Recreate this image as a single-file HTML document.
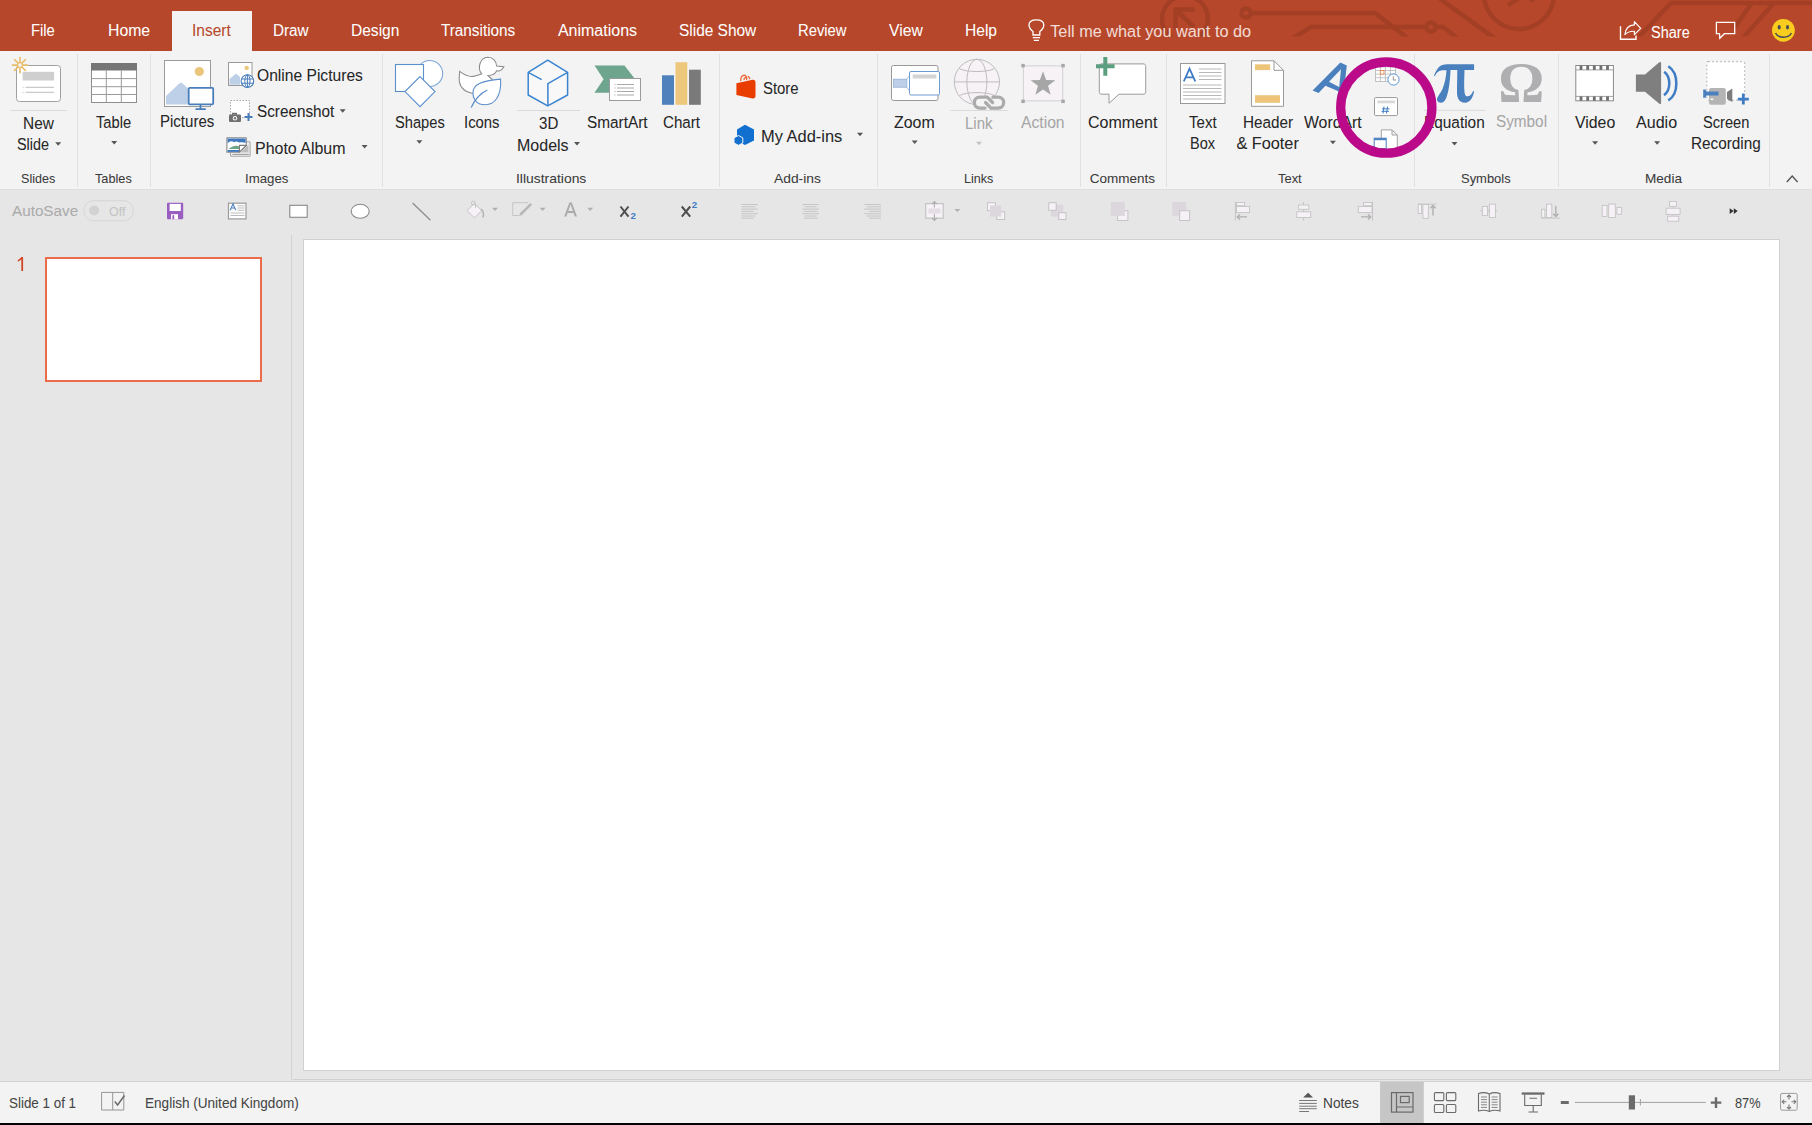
<!DOCTYPE html><html><head><meta charset="utf-8"><title>PowerPoint</title><style>*{margin:0;padding:0;box-sizing:border-box}
html,body{width:1812px;height:1125px;overflow:hidden;background:#E6E6E6;font-family:"Liberation Sans",sans-serif}
.t{position:absolute;white-space:nowrap;-webkit-text-stroke:0.05px currentColor}
svg{overflow:visible}
</style></head><body><div style="position:absolute;left:0px;top:0px;width:1812px;height:51px;background:#B7472A;"></div>
<div style="position:absolute;left:0px;top:51px;width:1812px;height:138px;background:#F3F3F3;"></div>
<div style="position:absolute;left:0px;top:189px;width:1812px;height:1px;background:#DFDFDF;"></div>
<div style="position:absolute;left:293px;top:1079px;width:1519px;height:1px;background:#D0D0D0;"></div>
<div style="position:absolute;left:0px;top:1081px;width:1812px;height:1px;background:#D2D2D2;"></div>
<div style="position:absolute;left:0px;top:1082px;width:1812px;height:41px;background:#F3F3F3;"></div>
<div style="position:absolute;left:0px;top:1123px;width:1812px;height:2px;background:#000;"></div>
<svg style="position:absolute;left:0;top:0" width="1812" height="51" viewBox="0 0 1812 51">
<defs><clipPath id="cp"><rect x="0" y="0" width="1812" height="36.5"/></clipPath></defs><g fill="none" stroke="#A33F25" stroke-width="4.5" clip-path="url(#cp)">
<circle cx="1185" cy="19" r="23"/>
<path d="M1178 12 L1194 27 M1175.5 9.5 L1175.5 29 M1173.5 9.5 L1194.5 9.5"/>
<circle cx="1246" cy="13" r="4.5"/>
<path d="M1251 13 L1375 13 L1410 40"/>
<path d="M1290 40 L1311 27 L1426 27 M1436 27 L1443 27 L1460 40"/>
<circle cx="1431" cy="27" r="4.5"/>
<path d="M1439 -2 L1497 40"/>
<circle cx="1519" cy="-6" r="35"/>
<path d="M1508 5 L1532 -10 M1532 -10 L1520 -10 M1532 -10 L1532 2"/>
<path d="M1636 40 L1671 3 L1812 3"/>
<path d="M1734 28 L1752 3"/>
<path d="M1741 40 L1774 3"/>
</g></svg>
<div style="position:absolute;left:172px;top:11px;width:80px;height:40px;background:#F3F3F3;"></div>
<div class="t" style="left:30.70px;top:23.15px;font-size:16px;line-height:16px;color:#FFFFFF;transform:scaleX(0.9243);transform-origin:0 0;">File</div>
<div class="t" style="left:107.60px;top:23.15px;font-size:16px;line-height:16px;color:#FFFFFF;transform:scaleX(0.9871);transform-origin:0 0;">Home</div>
<div class="t" style="left:273.20px;top:23.15px;font-size:16px;line-height:16px;color:#FFFFFF;transform:scaleX(0.9547);transform-origin:0 0;">Draw</div>
<div class="t" style="left:350.60px;top:23.15px;font-size:16px;line-height:16px;color:#FFFFFF;transform:scaleX(0.9709);transform-origin:0 0;">Design</div>
<div class="t" style="left:441.30px;top:23.15px;font-size:16px;line-height:16px;color:#FFFFFF;transform:scaleX(0.9556);transform-origin:0 0;">Transitions</div>
<div class="t" style="left:557.90px;top:23.15px;font-size:16px;line-height:16px;color:#FFFFFF;">Animations</div>
<div class="t" style="left:679.30px;top:23.15px;font-size:16px;line-height:16px;color:#FFFFFF;transform:scaleX(0.9645);transform-origin:0 0;">Slide Show</div>
<div class="t" style="left:798.30px;top:23.15px;font-size:16px;line-height:16px;color:#FFFFFF;transform:scaleX(0.9251);transform-origin:0 0;">Review</div>
<div class="t" style="left:888.70px;top:23.15px;font-size:16px;line-height:16px;color:#FFFFFF;transform:scaleX(0.9826);transform-origin:0 0;">View</div>
<div class="t" style="left:964.80px;top:23.15px;font-size:16px;line-height:16px;color:#FFFFFF;transform:scaleX(0.9727);transform-origin:0 0;">Help</div>
<div class="t" style="left:192.30px;top:23.15px;font-size:16px;line-height:16px;color:#B7472A;transform:scaleX(0.9675);transform-origin:0 0;">Insert</div>
<div class="t" style="left:1050.20px;top:22.70px;font-size:16.3px;line-height:16.3px;color:#F2DCD5;">Tell me what you want to do</div>
<div class="t" style="left:1650.70px;top:24.62px;font-size:15.8px;line-height:15.8px;color:#FFFFFF;transform:scaleX(0.9183);transform-origin:0 0;">Share</div>
<div style="position:absolute;left:77px;top:54px;width:1px;height:133px;background:#E1E1E1;"></div>
<div style="position:absolute;left:150px;top:54px;width:1px;height:133px;background:#E1E1E1;"></div>
<div style="position:absolute;left:382px;top:54px;width:1px;height:133px;background:#E1E1E1;"></div>
<div style="position:absolute;left:719px;top:54px;width:1px;height:133px;background:#E1E1E1;"></div>
<div style="position:absolute;left:877px;top:54px;width:1px;height:133px;background:#E1E1E1;"></div>
<div style="position:absolute;left:1080px;top:54px;width:1px;height:133px;background:#E1E1E1;"></div>
<div style="position:absolute;left:1166px;top:54px;width:1px;height:133px;background:#E1E1E1;"></div>
<div style="position:absolute;left:1414px;top:54px;width:1px;height:133px;background:#E1E1E1;"></div>
<div style="position:absolute;left:1558px;top:54px;width:1px;height:133px;background:#E1E1E1;"></div>
<div style="position:absolute;left:1769px;top:54px;width:1px;height:133px;background:#E1E1E1;"></div>
<div class="t" style="left:23.40px;top:114.80px;font-size:16.3px;line-height:16.3px;color:#262626;transform:scaleX(0.9466);transform-origin:0 0;">New</div>
<div class="t" style="left:16.50px;top:135.70px;font-size:16.3px;line-height:16.3px;color:#262626;transform:scaleX(0.8828);transform-origin:0 0;">Slide</div>
<div class="t" style="left:95.80px;top:113.90px;font-size:16.3px;line-height:16.3px;color:#262626;transform:scaleX(0.9026);transform-origin:0 0;">Table</div>
<div class="t" style="left:160.30px;top:113.40px;font-size:16.3px;line-height:16.3px;color:#262626;transform:scaleX(0.9226);transform-origin:0 0;">Pictures</div>
<div class="t" style="left:256.60px;top:66.90px;font-size:16.3px;line-height:16.3px;color:#262626;transform:scaleX(0.9593);transform-origin:0 0;">Online Pictures</div>
<div class="t" style="left:256.60px;top:103.10px;font-size:16.3px;line-height:16.3px;color:#262626;transform:scaleX(0.9382);transform-origin:0 0;">Screenshot</div>
<div class="t" style="left:255.30px;top:139.50px;font-size:16.3px;line-height:16.3px;color:#262626;transform:scaleX(0.9805);transform-origin:0 0;">Photo Album</div>
<div class="t" style="left:394.60px;top:113.50px;font-size:16.3px;line-height:16.3px;color:#262626;transform:scaleX(0.9014);transform-origin:0 0;">Shapes</div>
<div class="t" style="left:463.50px;top:113.50px;font-size:16.3px;line-height:16.3px;color:#262626;transform:scaleX(0.9128);transform-origin:0 0;">Icons</div>
<div class="t" style="left:538.50px;top:115.00px;font-size:16.3px;line-height:16.3px;color:#262626;transform:scaleX(0.9253);transform-origin:0 0;">3D</div>
<div class="t" style="left:517.00px;top:136.60px;font-size:16.3px;line-height:16.3px;color:#262626;transform:scaleX(0.9829);transform-origin:0 0;">Models</div>
<div class="t" style="left:587.30px;top:113.50px;font-size:16.3px;line-height:16.3px;color:#262626;transform:scaleX(0.9432);transform-origin:0 0;">SmartArt</div>
<div class="t" style="left:663.30px;top:113.50px;font-size:16.3px;line-height:16.3px;color:#262626;transform:scaleX(0.9308);transform-origin:0 0;">Chart</div>
<div class="t" style="left:762.60px;top:79.80px;font-size:16.3px;line-height:16.3px;color:#262626;transform:scaleX(0.9154);transform-origin:0 0;">Store</div>
<div class="t" style="left:761.00px;top:128.30px;font-size:16.3px;line-height:16.3px;color:#262626;transform:scaleX(1.0099);transform-origin:0 0;">My Add-ins</div>
<div class="t" style="left:893.50px;top:114.00px;font-size:16.3px;line-height:16.3px;color:#262626;transform:scaleX(0.9772);transform-origin:0 0;">Zoom</div>
<div class="t" style="left:964.90px;top:114.80px;font-size:16.3px;line-height:16.3px;color:#A6A6A6;transform:scaleX(0.9200);transform-origin:0 0;">Link</div>
<div class="t" style="left:1021.00px;top:114.00px;font-size:16.3px;line-height:16.3px;color:#A6A6A6;transform:scaleX(0.9635);transform-origin:0 0;">Action</div>
<div class="t" style="left:1087.90px;top:114.00px;font-size:16.3px;line-height:16.3px;color:#262626;transform:scaleX(0.9823);transform-origin:0 0;">Comment</div>
<div class="t" style="left:1188.70px;top:113.70px;font-size:16.3px;line-height:16.3px;color:#262626;transform:scaleX(0.9233);transform-origin:0 0;">Text</div>
<div class="t" style="left:1190.00px;top:134.90px;font-size:16.3px;line-height:16.3px;color:#262626;transform:scaleX(0.8929);transform-origin:0 0;">Box</div>
<div class="t" style="left:1242.50px;top:113.70px;font-size:16.3px;line-height:16.3px;color:#262626;transform:scaleX(0.9383);transform-origin:0 0;">Header</div>
<div class="t" style="left:1236.40px;top:134.90px;font-size:16.3px;line-height:16.3px;color:#262626;">&amp; Footer</div>
<div class="t" style="left:1303.90px;top:113.70px;font-size:16.3px;line-height:16.3px;color:#262626;transform:scaleX(0.9697);transform-origin:0 0;">WordArt</div>
<div class="t" style="left:1424.00px;top:114.30px;font-size:16.3px;line-height:16.3px;color:#262626;transform:scaleX(0.9447);transform-origin:0 0;">Equation</div>
<div class="t" style="left:1495.60px;top:113.30px;font-size:16.3px;line-height:16.3px;color:#A6A6A6;transform:scaleX(0.9401);transform-origin:0 0;">Symbol</div>
<div class="t" style="left:1574.90px;top:113.90px;font-size:16.3px;line-height:16.3px;color:#262626;transform:scaleX(0.9735);transform-origin:0 0;">Video</div>
<div class="t" style="left:1636.10px;top:113.90px;font-size:16.3px;line-height:16.3px;color:#262626;transform:scaleX(0.9868);transform-origin:0 0;">Audio</div>
<div class="t" style="left:1702.50px;top:113.90px;font-size:16.3px;line-height:16.3px;color:#262626;transform:scaleX(0.8986);transform-origin:0 0;">Screen</div>
<div class="t" style="left:1690.90px;top:134.80px;font-size:16.3px;line-height:16.3px;color:#262626;transform:scaleX(0.9401);transform-origin:0 0;">Recording</div>
<div class="t" style="left:20.90px;top:172.07px;font-size:13.5px;line-height:13.5px;color:#3A3A3A;transform:scaleX(0.9306);transform-origin:0 0;">Slides</div>
<div class="t" style="left:95.00px;top:172.07px;font-size:13.5px;line-height:13.5px;color:#3A3A3A;transform:scaleX(0.9436);transform-origin:0 0;">Tables</div>
<div class="t" style="left:245.00px;top:172.07px;font-size:13.5px;line-height:13.5px;color:#3A3A3A;transform:scaleX(0.9808);transform-origin:0 0;">Images</div>
<div class="t" style="left:515.50px;top:172.07px;font-size:13.5px;line-height:13.5px;color:#3A3A3A;transform:scaleX(1.0300);transform-origin:0 0;">Illustrations</div>
<div class="t" style="left:774.40px;top:172.07px;font-size:13.5px;line-height:13.5px;color:#3A3A3A;transform:scaleX(1.0251);transform-origin:0 0;">Add-ins</div>
<div class="t" style="left:964.40px;top:172.07px;font-size:13.5px;line-height:13.5px;color:#3A3A3A;transform:scaleX(0.9302);transform-origin:0 0;">Links</div>
<div class="t" style="left:1089.70px;top:172.07px;font-size:13.5px;line-height:13.5px;color:#3A3A3A;">Comments</div>
<div class="t" style="left:1278.30px;top:172.07px;font-size:13.5px;line-height:13.5px;color:#3A3A3A;transform:scaleX(0.9576);transform-origin:0 0;">Text</div>
<div class="t" style="left:1460.50px;top:172.07px;font-size:13.5px;line-height:13.5px;color:#3A3A3A;transform:scaleX(0.9585);transform-origin:0 0;">Symbols</div>
<div class="t" style="left:1645.00px;top:172.07px;font-size:13.5px;line-height:13.5px;color:#3A3A3A;transform:scaleX(1.0054);transform-origin:0 0;">Media</div>
<div class="t" style="left:12.20px;top:204.42px;font-size:14.5px;line-height:14.5px;color:#ABABAB;transform:scaleX(1.0518);transform-origin:0 0;">AutoSave</div>
<div class="t" style="left:109.00px;top:205.49px;font-size:13px;line-height:13px;color:#C4C4C4;transform:scaleX(0.9623);transform-origin:0 0;">Off</div>
<div style="position:absolute;left:45px;top:257px;width:217px;height:125px;background:#FFFFFF;border:2px solid #EC6B4B"></div>
<div style="position:absolute;left:291px;top:235px;width:1px;height:845px;background:#D2D2D2;"></div>
<div style="position:absolute;left:303px;top:239px;width:1477px;height:832px;background:#FFFFFF;border:1px solid #D0D0D0"></div>
<div class="t" style="left:8.80px;top:1095.40px;font-size:15px;line-height:15px;color:#444444;transform:scaleX(0.8933);transform-origin:0 0;">Slide 1 of 1</div>
<div class="t" style="left:145.30px;top:1095.40px;font-size:15px;line-height:15px;color:#444444;transform:scaleX(0.9041);transform-origin:0 0;">English (United Kingdom)</div>
<div class="t" style="left:1322.90px;top:1095.20px;font-size:15px;line-height:15px;color:#444444;transform:scaleX(0.9121);transform-origin:0 0;">Notes</div>
<div class="t" style="left:1734.50px;top:1095.20px;font-size:15px;line-height:15px;color:#444444;transform:scaleX(0.8500);transform-origin:0 0;">87%</div>
<svg style="position:absolute;left:0;top:0" width="1812" height="1125" viewBox="0 0 1812 1125"><rect x="83.8" y="200.7" width="49.6" height="20.1" rx="10" fill="none" stroke="#D6D6D6" stroke-width="1"/><circle cx="94.1" cy="210.5" r="5" fill="#D2D2D2"/><path d="M167 204 C167 203.2 167.5 202.7 168.3 202.7 L181.9 202.7 C182.7 202.7 183.2 203.2 183.2 204 L183.2 217.9 C183.2 218.7 182.7 219.2 181.9 219.2 L168.3 219.2 C167.5 219.2 167 218.7 167 217.9 Z" fill="#9A5EC0"/><rect x="169.6" y="203.9" width="11.2" height="7.1" fill="#FFF"/><rect x="171" y="214.2" width="7" height="5" fill="#FFF"/><rect x="172.4" y="215.2" width="1.8" height="4" fill="#9A5EC0"/><rect x="228.5" y="203.2" width="17.5" height="15.7" fill="#FFF" stroke="#9A9A9A" stroke-width="1.2"/><path d="M230.2 210.2 L233 203.8 L235.8 210.2 M231.2 208 L234.8 208" fill="none" stroke="#4A80BE" stroke-width="1.1"/><path d="M237.5 205.8 L244.5 205.8 M237.5 208 L244.5 208 M237.5 210.3 L244.5 210.3 M230.5 213 L244.5 213 M230.5 215.5 L244.5 215.5" stroke="#ABABAB" stroke-width="0.8"/><rect x="289.8" y="205.3" width="17.4" height="12" fill="#FFF" stroke="#8A8A8A" stroke-width="1.1"/><ellipse cx="360.2" cy="211.3" rx="9" ry="7" fill="#FFF" stroke="#8A8A8A" stroke-width="1.1"/><path d="M412.6 203 L430.5 220.3" stroke="#8A8A8A" stroke-width="1.2"/><path d="M474.4 203.4 L481.8 210.6 L474.4 217.8 L467 210.6 Z" fill="#F6F1F6" stroke="#C4C4C4" stroke-width="1"/><circle cx="473.4" cy="203" r="2" fill="none" stroke="#C4C4C4" stroke-width="0.9"/><path d="M475.6 204 L475.6 208" stroke="#C4C4C4"/><path d="M481 209 C483.5 211 484 214 483 217.5" fill="none" stroke="#B4B4B4" stroke-width="1.6"/><path d="M492.0 207.8 L498.0 207.8 L495 211.0 Z" fill="#B0B0B0"/><path d="M528.2 202.7 L512.7 202.7 L512.7 215.5 L519.5 215.5" fill="none" stroke="#C4C4C4" stroke-width="1"/><path d="M520.5 214.5 L531.2 203.8" stroke="#B8B8B8" stroke-width="2.6"/><path d="M519.3 216 L520.5 212.8 L522.3 214.6 Z" fill="#B8B8B8"/><path d="M539.6 207.8 L545.6 207.8 L542.6 211.0 Z" fill="#B0B0B0"/><path d="M564.2 216.6 L569.4 202.6 L571.8 202.6 L577 216.6 L574.8 216.6 L573.6 213 L567.6 213 L566.4 216.6 Z M568.3 211 L572.9 211 L570.6 204.6 Z" fill="#ABABAB" fill-rule="evenodd"/><path d="M587.2 207.8 L593.2 207.8 L590.2 211.0 Z" fill="#B0B0B0"/><path d="M620.5 206.5 L628.5 216.6 M628.5 206.5 L620.5 216.6" stroke="#4E4E4E" stroke-width="2.0"/><text x="630.4" y="218.7" font-family="Liberation Sans" font-weight="bold" font-size="9.8" fill="#3F7CC4">2</text><path d="M681.8 206.5 L690.2 216.6 M690.2 206.5 L681.8 216.6" stroke="#4E4E4E" stroke-width="2.0"/><text x="691.8" y="207.8" font-family="Liberation Sans" font-weight="bold" font-size="9.8" fill="#3F7CC4">2</text><path d="M741.5 204.5 L757.8 204.5 M741.5 206.8 L755.5 206.8 M741.5 209.1 L757.8 209.1 M741.5 211.4 L753.5 211.4 M741.5 213.7 L757.8 213.7 M741.5 216.0 L755.5 216.0 M741.5 218.2 L753.5 218.2 " stroke="#C2C2C2" stroke-width="0.9"/><path d="M802.4 204.5 L819.0 204.5 M804.7 206.8 L816.7 206.8 M802.4 209.1 L819.0 209.1 M803.7 211.4 L817.7 211.4 M802.4 213.7 L819.0 213.7 M804.7 216.0 L816.7 216.0 M803.7 218.2 L817.7 218.2 " stroke="#C2C2C2" stroke-width="0.9"/><path d="M864.4 204.5 L881.0 204.5 M867.0 206.8 L881.0 206.8 M864.4 209.1 L881.0 209.1 M869.0 211.4 L881.0 211.4 M864.4 213.7 L881.0 213.7 M867.0 216.0 L881.0 216.0 M869.0 218.2 L881.0 218.2 " stroke="#C2C2C2" stroke-width="0.9"/><rect x="925.7" y="203.6" width="17.5" height="14.6" fill="#F6F1F6" stroke="#C4C4C4" stroke-width="1.2"/><rect x="928.5" y="208.5" width="12" height="5" fill="#E4DEE4"/><path d="M934.4 201.5 L934.4 207.5 M932 204 L934.4 201.5 L936.8 204 M934.4 214 L934.4 220.5 M932 218 L934.4 220.5 L936.8 218" fill="none" stroke="#B0B0B0" stroke-width="1.2"/><path d="M954.4 208.9 L960.4 208.9 L957.4 212.1 Z" fill="#B0B0B0"/><rect x="987.5" y="202.7" width="8" height="8" fill="#F6F1F6" stroke="#C4C4C4"/><rect x="996.7" y="211.8" width="8" height="7.7" fill="#F6F1F6" stroke="#C4C4C4"/><rect x="990" y="205.4" width="11.1" height="11.2" fill="#DCD7DC"/><rect x="1051" y="204.7" width="12.3" height="11.9" fill="#DCD7DC"/><rect x="1048.7" y="202.7" width="7.5" height="7.6" fill="#F6F1F6" stroke="#C4C4C4"/><rect x="1058.7" y="212.7" width="7.3" height="6.8" fill="#F6F1F6" stroke="#C4C4C4"/><rect x="1117.5" y="210.7" width="10.4" height="9.8" fill="#F6F1F6" stroke="#C4C4C4"/><rect x="1110.7" y="202" width="14.2" height="13.9" fill="#DCD7DC"/><rect x="1172.2" y="202" width="14" height="13.9" fill="#DCD7DC"/><rect x="1179.7" y="210.7" width="9.9" height="9.8" fill="#F6F1F6" stroke="#C4C4C4"/><path d="M1235.4 202 L1235.4 220.5" stroke="#C4C4C4"/><rect x="1236.5" y="202.5" width="8.2" height="3.2" fill="#F6F1F6" stroke="#C4C4C4" stroke-width="0.9"/><rect x="1236.5" y="206.5" width="13.1" height="6.1" fill="#F6F1F6" stroke="#C4C4C4" stroke-width="0.9"/><path d="M1247 216.9 L1237.3 216.9 M1240 214.3 L1237.3 216.9 L1240 219.5" fill="none" stroke="#B0B0B0" stroke-width="1.4"/><path d="M1303.6 202 L1303.6 220.5" stroke="#C4C4C4"/><rect x="1298.5" y="205" width="10.3" height="4.3" fill="#F6F1F6" stroke="#C4C4C4" stroke-width="0.9"/><rect x="1296.7" y="211.8" width="14" height="5.7" fill="#F6F1F6" stroke="#C4C4C4" stroke-width="0.9"/><path d="M1372.5 202 L1372.5 220.5" stroke="#C4C4C4"/><rect x="1363.6" y="202.5" width="8.4" height="3.2" fill="#F6F1F6" stroke="#C4C4C4" stroke-width="0.9"/><rect x="1358.3" y="206.5" width="13.7" height="6.1" fill="#F6F1F6" stroke="#C4C4C4" stroke-width="0.9"/><path d="M1361 216.9 L1370.7 216.9 M1368 214.3 L1370.7 216.9 L1368 219.5" fill="none" stroke="#B0B0B0" stroke-width="1.4"/><path d="M1418 204.1 L1436.5 204.1" stroke="#C4C4C4"/><rect x="1418.2" y="204.5" width="3.4" height="9" fill="#F6F1F6" stroke="#C4C4C4" stroke-width="0.9"/><rect x="1422.9" y="204.5" width="5.4" height="13.8" fill="#F6F1F6" stroke="#C4C4C4" stroke-width="0.9"/><path d="M1433 215.5 L1433 205.5 M1430.4 208.2 L1433 205.5 L1435.6 208.2" fill="none" stroke="#B0B0B0" stroke-width="1.4"/><path d="M1480.5 210.8 L1497.2 210.8" stroke="#C4C4C4"/><rect x="1482.3" y="206.5" width="5.3" height="8.9" fill="#F6F1F6" stroke="#C4C4C4" stroke-width="0.9"/><rect x="1489.4" y="204.1" width="6.1" height="13.4" fill="#F6F1F6" stroke="#C4C4C4" stroke-width="0.9"/><path d="M1541.2 218.1 L1559.8 218.1" stroke="#C4C4C4"/><rect x="1541.6" y="209.3" width="3.3" height="8.2" fill="#F6F1F6" stroke="#C4C4C4" stroke-width="0.9"/><rect x="1546.5" y="204.1" width="5.3" height="13.4" fill="#F6F1F6" stroke="#C4C4C4" stroke-width="0.9"/><path d="M1555.8 206 L1555.8 216.5 M1553.2 213.8 L1555.8 216.5 L1558.4 213.8" fill="none" stroke="#B0B0B0" stroke-width="1.4"/><rect x="1602.2" y="205.4" width="4.8" height="11" fill="#F6F1F6" stroke="#C4C4C4" stroke-width="0.9"/><rect x="1608.7" y="204" width="6.6" height="13.5" fill="#F6F1F6" stroke="#C4C4C4" stroke-width="0.9"/><rect x="1616.9" y="207.4" width="4.7" height="6.8" fill="#F6F1F6" stroke="#C4C4C4" stroke-width="0.9"/><path d="M1673 206.3 L1673 216.2" stroke="#C4C4C4" stroke-width="0.8"/><rect x="1669.6" y="201.4" width="6.9" height="4.9" fill="#F6F1F6" stroke="#C4C4C4" stroke-width="0.9"/><rect x="1666.1" y="208.2" width="14" height="6.2" fill="#F6F1F6" stroke="#C4C4C4" stroke-width="0.9"/><rect x="1667.5" y="216.2" width="11.2" height="5" fill="#F6F1F6" stroke="#C4C4C4" stroke-width="0.9"/><path d="M1729.7 208.2 L1733.6 211.1 L1729.7 214 Z M1733.8 208.2 L1737.7 211.1 L1733.8 214 Z" fill="#333"/><path d="M21.3 257 L23.1 257 L23.1 271.1 L21.3 271.1 L21.3 259.6 C20.3 260.6 19 261.3 17.8 261.8 L17.8 260 C19.3 259.3 20.5 258.3 21.3 257 Z" fill="#D24726"/><path d="M101.6 1092.4 L112.7 1092.4 L112.7 1110 L101.6 1110 Z M112.7 1092.4 L123.8 1092.4 L123.8 1110 L112.7 1110" fill="none" stroke="#8A8A8A" stroke-width="0.9"/><path d="M114.8 1101.5 L117.6 1105 L124.5 1095.5" fill="none" stroke="#6A6A6A" stroke-width="1.5"/><path d="M1303.1 1097.6 L1308.1 1092.7 L1313.1 1097.6 Z" fill="#555"/><path d="M1299.2 1100.5 L1316.8 1100.5 M1299.2 1103.4 L1316.8 1103.4 M1299.2 1106.2 L1316.8 1106.2 M1299.2 1108.7 L1316.8 1108.7 M1299.2 1111.5 L1309 1111.5" stroke="#6A6A6A" stroke-width="0.9"/><rect x="1380.1" y="1082" width="43.7" height="41" fill="#C6C6C6"/><rect x="1391.5" y="1092.6" width="21.5" height="19.5" fill="none" stroke="#6A6A6A" stroke-width="1.2"/><path d="M1396.5 1092.6 L1396.5 1112.1 M1396.5 1107 L1413 1107" stroke="#6A6A6A" stroke-width="1.2"/><rect x="1400.5" y="1096.4" width="8.7" height="6.2" fill="none" stroke="#6A6A6A" stroke-width="1.2"/><rect x="1434.4" y="1092.6" width="9.4" height="8" rx="1" fill="none" stroke="#6A6A6A" stroke-width="1.1"/><rect x="1434.4" y="1104.5" width="9.4" height="8" rx="1" fill="none" stroke="#6A6A6A" stroke-width="1.1"/><rect x="1446.4" y="1092.6" width="9.4" height="8" rx="1" fill="none" stroke="#6A6A6A" stroke-width="1.1"/><rect x="1446.4" y="1104.5" width="9.4" height="8" rx="1" fill="none" stroke="#6A6A6A" stroke-width="1.1"/><path d="M1478.5 1093.5 C1482 1092.3 1486 1092.3 1489.3 1094 C1492.6 1092.3 1496.6 1092.3 1500 1093.5 L1500 1111 C1496.6 1110 1492.6 1110 1489.3 1111.5 C1486 1110 1482 1110 1478.5 1111 Z M1489.3 1094 L1489.3 1111.5" fill="none" stroke="#6A6A6A" stroke-width="1.1"/><path d="M1481 1097 L1487 1097 M1481 1099.6 L1487 1099.6 M1481 1102.2 L1487 1102.2 M1481 1104.8 L1487 1104.8 M1481 1107.4 L1487 1107.4 M1491.6 1097 L1497.6 1097 M1491.6 1099.6 L1497.6 1099.6 M1491.6 1102.2 L1497.6 1102.2 M1491.6 1104.8 L1497.6 1104.8 M1491.6 1107.4 L1497.6 1107.4" stroke="#6A6A6A" stroke-width="0.8"/><rect x="1521.7" y="1092.4" width="22.8" height="2.3" fill="#6A6A6A"/><path d="M1524.7 1094.7 L1524.7 1105.5 L1541.3 1105.5 L1541.3 1094.7 M1529.5 1098.3 L1537 1098.3 M1533.2 1105.5 L1533.2 1111.8 M1528.5 1112 L1538 1112" fill="none" stroke="#6A6A6A" stroke-width="1.1"/><rect x="1560.8" y="1101" width="8" height="3" fill="#6A6A6A"/><path d="M1574.9 1102.4 L1705.9 1102.4" stroke="#A0A0A0" stroke-width="1"/><rect x="1628.8" y="1095.3" width="6.2" height="14.2" fill="#6A6A6A"/><path d="M1640.4 1099 L1640.4 1105.4" stroke="#A0A0A0" stroke-width="1"/><path d="M1710.8 1102.6 L1721.3 1102.6 M1716 1097.2 L1716 1108" stroke="#6A6A6A" stroke-width="2.4"/><rect x="1780.6" y="1093.4" width="16.6" height="16.8" rx="1.5" fill="none" stroke="#9A9A9A" stroke-width="1"/><path d="M1789 1095 L1789 1099.5 M1789 1104.5 L1789 1109 M1782.2 1101.8 L1786.5 1101.8 M1791.5 1101.8 L1795.8 1101.8 M1787 1097 L1789 1095 L1791 1097 M1787 1107 L1789 1109 L1791 1107 M1784.2 1099.8 L1782.2 1101.8 L1784.2 1103.8 M1793.8 1099.8 L1795.8 1101.8 L1793.8 1103.8" fill="none" stroke="#7A7A7A" stroke-width="1.1"/><g fill="none" stroke="#FFF" stroke-width="1.3"><path d="M1033 35 L1033 31.5 C1029 28.5 1029 25.5 1029 25 C1029 21 1032 19.8 1036.4 19.8 C1040.8 19.8 1043.8 21 1043.8 25 C1043.8 25.5 1043.8 28.5 1039.8 31.5 L1039.8 35 Z"/><path d="M1032.8 37.6 L1040 37.6 M1033.8 40.3 L1039 40.3"/></g><g fill="none" stroke="#FFF" stroke-width="1.4"><path d="M1620.5 26.2 L1620.5 39.2 L1636 39.2 L1636 35.5"/><path d="M1624.9 34.6 C1625.5 28.5 1629 25.2 1634.4 24.9 L1634.4 21.6 L1640.7 28.3 L1634.4 34.6 L1634.4 31.3 C1630 31 1627 32.5 1624.9 34.6 Z" stroke-width="1.2" stroke-linejoin="round"/></g><path d="M1716.4 22.3 L1734.7 22.3 L1734.7 33.7 L1724.4 33.7 L1719.8 38.3 L1719.5 33.7 L1716.4 33.7 Z" fill="none" stroke="#FFF" stroke-width="1.3"/><circle cx="1783.4" cy="30.3" r="11.4" fill="#F8CD1E"/><ellipse cx="1779.2" cy="27.2" rx="1.5" ry="2.2" fill="#464B5C"/><ellipse cx="1787.5" cy="27.2" rx="1.5" ry="2.2" fill="#464B5C"/><path d="M1775.5 33 C1778 38.6 1789 38.6 1791.4 33" fill="none" stroke="#464B5C" stroke-width="1.5"/><rect x="16.5" y="65.5" width="44" height="36" rx="3" fill="#FFF" stroke="#A0A0A0"/><rect x="22.6" y="71.8" width="31.5" height="8.7" fill="#CFCFCF"/><path d="M25.5 87.3 L54 87.3 M25.5 92.3 L54 92.3" stroke="#BDBDBD" stroke-width="1"/><path d="M22.5 87.3 L23.5 87.3 M22.5 92.3 L23.5 92.3" stroke="#BDBDBD"/><circle cx="20" cy="65.1" r="2.5" fill="#F3F3F3" stroke="#EABD6C" stroke-width="1.3"/><path d="M23.40 65.10 L27.60 65.10 M22.40 67.50 L25.37 70.47 M20.00 68.50 L20.00 72.70 M17.60 67.50 L14.63 70.47 M16.60 65.10 L12.40 65.10 M17.60 62.70 L14.63 59.73 M20.00 61.70 L20.00 57.50 M22.40 62.70 L25.37 59.73 " stroke="#EABD6C" stroke-width="1.7" stroke-linecap="round"/><path d="M10 110.5 L67 110.5" stroke="#DADADA"/><path d="M55.2 142.15 L61.2 142.15 L58.2 145.65 Z" fill="#555"/><rect x="91.5" y="63.5" width="45" height="39" fill="#FFF" stroke="#8E8E8E"/><rect x="91" y="63" width="46" height="7.5" fill="#767676"/><path d="M106.3 70.5 L106.3 102.5 M121.3 70.5 L121.3 102.5 M91.5 78.6 L136.5 78.6 M91.5 86.7 L136.5 86.7 M91.5 94.5 L136.5 94.5" stroke="#9A9A9A"/><path d="M111.2 140.95 L117.2 140.95 L114.2 144.45 Z" fill="#555"/><rect x="164.5" y="60.5" width="46" height="46" fill="#FFF" stroke="#9A9A9A"/><circle cx="199.3" cy="71.5" r="4.6" fill="#EBC57A"/><path d="M166 104.5 L166 96 L179 83.8 C180.5 82.5 181.5 82.5 183 83.8 L188 88.5 L188 104.5 Z" fill="#BDD0E8"/><rect x="188.7" y="87.8" width="24.5" height="16.5" rx="1" fill="#FFF" stroke="#4A7EBB" stroke-width="1.8"/><path d="M200.5 104.5 L200.5 108.5 M195.5 109.2 L205.8 109.2" stroke="#4A7EBB" stroke-width="1.8"/><rect x="228.5" y="62.5" width="23.5" height="23" fill="#FFF" stroke="#9A9A9A"/><circle cx="246.7" cy="67.9" r="2.2" fill="#EBC57A"/><path d="M229.5 84.7 L229.5 79 L236 73.5 L240 77 L240 84.7 Z" fill="#BDD0E8"/><circle cx="247.4" cy="81.1" r="6.3" fill="#FFF" stroke="#4A7EBB" stroke-width="1.1"/><ellipse cx="247.4" cy="81.1" rx="2.6" ry="6.3" fill="none" stroke="#4A7EBB" stroke-width="1"/><path d="M241.3 79 L253.5 79 M241.3 83.2 L253.5 83.2 M247.4 74.8 L247.4 87.4" stroke="#4A7EBB" stroke-width="1"/><rect x="230.5" y="100.5" width="19" height="17" fill="#FFF" stroke="#A8A8A8" stroke-dasharray="1.5 1.5"/><rect x="229" y="114.5" width="12" height="7.5" rx="1" fill="#707070"/><rect x="232" y="112.8" width="5" height="2" fill="#707070"/><circle cx="235" cy="118.2" r="2.2" fill="#FFF"/><circle cx="235" cy="118.2" r="1.2" fill="#707070"/><path d="M244.5 116.9 L252.5 116.9 M248.5 112.9 L248.5 120.9" stroke="#4A7EBB" stroke-width="2"/><path d="M339.7 109.25 L345.7 109.25 L342.7 112.75 Z" fill="#555"/><rect x="230.5" y="141.7" width="19.6" height="14.6" rx="0.8" fill="#F0F0F0" stroke="#A8A8A8" stroke-width="1.1"/><path d="M232.5 154.4 L248.8 154.4" stroke="#8C8C8C" stroke-width="0.9"/><path d="M240.5 152.5 L248.5 144.5 L248.5 152.5 Z" fill="#BDBDBD"/><path d="M226.9 137.7 L246.3 137.7 L246.3 145.4 L239.4 152.2 L226.9 152.2 Z" fill="#FFF" stroke="#8A8A8A" stroke-width="1.1" stroke-linejoin="round"/><path d="M227.6 138.4 L245.6 138.4 L245.6 143 C243 141.8 241 142.2 239 142.5 C237 141.2 235.5 141.5 234 142.3 C232 140.5 229.5 141 227.6 143.5 Z" fill="#3F78BE"/><path d="M228.5 148.9 C231.5 146.7 234 145.7 236 145.7 C238 145.7 240 146.8 241 148.9 Z" fill="#6BA58B"/><rect x="227.6" y="150" width="12" height="1.9" fill="#3F78BE"/><path d="M239.4 145.4 L246.3 145.4 L239.4 152.2 Z" fill="#FFF" stroke="#7A7A7A" stroke-width="1.1" stroke-linejoin="round"/><path d="M361.6 144.95 L367.6 144.95 L364.6 148.45 Z" fill="#555"/><circle cx="429.7" cy="73.5" r="13" fill="#FFF" stroke="#7FA7D8" stroke-width="1.1"/><rect x="395.5" y="64.5" width="28" height="27" fill="#FFF" stroke="#5D8FCC" stroke-width="1.1"/><path d="M420 76.6 L435 91.6 L420 106.6 L405 91.6 Z" fill="#FFF" stroke="#5D8FCC" stroke-width="1.1"/><path d="M416.4 140.25 L422.4 140.25 L419.4 143.75 Z" fill="#555"/><path d="M459.7 71.4 C465 75.5 470 77.5 475 76 L481.6 73.9 C477 68 480 57.5 487.7 57.3 C493 57.3 496.5 61 496.6 66 L503.8 66.8 C502 70 499 71.5 496.6 70.7 C495.5 74 492 75.5 488 75.5 L492 79.3 L490 93 L471.9 93.2 C462 91 459 85 459.2 78 Z" fill="#FFF" stroke="#8C8C8C" stroke-width="1.1"/><path d="M500.6 79.1 C501.5 96 495 104.7 485 104.7 C477 104.7 473 99.5 473 93 C473 84.5 481 81 500.6 79.1 Z" fill="#FFF" stroke="#5C8FCB" stroke-width="1.1"/><path d="M471.2 107.6 C475 99 480 93.5 487.3 90" fill="none" stroke="#5C8FCB" stroke-width="1.3"/><path d="M547.7 60.2 L567.6 72.4 L567.6 95 L547.7 105.8 L528.2 95 L528.2 72.4 Z" fill="#F8F8F8" stroke="#3A84D0" stroke-width="1.5" stroke-linejoin="round"/><path d="M567.6 72.4 L547.9 83.6 L547.9 105.8 M528.2 72.4 L541.7 79.6" fill="none" stroke="#3A84D0" stroke-width="1.5"/><path d="M517 110.5 L580 110.5" stroke="#DADADA"/><path d="M574.0 142.05 L580.0 142.05 L577 145.55 Z" fill="#555"/><path d="M594.5 65.6 L624.5 65.6 L634.2 78 L634.2 92.8 L594.5 92.8 L603.6 79.2 Z" fill="#6DA58F"/><rect x="609.5" y="78.5" width="31" height="22" fill="#FFF" stroke="#9A9A9A"/><path d="M617 84.5 L634 84.5 M617 88 L634 88 M617 91.5 L634 91.5 M617 95 L634 95" stroke="#A8A8A8"/><path d="M614.5 84.5 L615.5 84.5 M614.5 88 L615.5 88 M614.5 91.5 L615.5 91.5 M614.5 95 L615.5 95" stroke="#A8A8A8"/><rect x="662" y="75.3" width="12" height="29.5" fill="#4F81BD"/><rect x="675.5" y="62.2" width="11.8" height="42.6" fill="#EDC77C"/><rect x="689" y="69.7" width="11.8" height="35.1" fill="#7A7A7A"/><path d="M736.4 83.2 L752.5 79.7 C754.5 79.5 755.5 80.5 755.5 82 L755.5 96 C755.5 97.8 754.3 98.6 752.5 98.4 L736.4 95 Z" fill="#E93D00"/><path d="M740.8 80.6 C740.5 77 742 75.3 744.2 75.3 C746.2 75.3 747 77 746.6 79.5 M744 79.4 L745.3 77.4 M748.4 76.6 L749.8 78.5" fill="none" stroke="#EC6A3E" stroke-width="1.4" stroke-linecap="round"/><path d="M745 124.7 L754 129.5 L754 140.5 L745 145 L737 141 L737 129.5 Z" fill="#1170CF"/><path d="M738.5 135.5 L742.8 137.8 L742.8 143 L738.5 145.3 L734 143 L734 137.8 Z" fill="#1170CF" stroke="#F3F3F3" stroke-width="1"/><path d="M857.0 132.85 L863.0 132.85 L860 136.35 Z" fill="#555"/><rect x="891.5" y="65.5" width="46.5" height="35" rx="2" fill="#FFF" stroke="#999"/><rect x="909.5" y="71.5" width="30" height="23.5" rx="1.5" fill="#FFF" stroke="#6E9AD2"/><rect x="912.7" y="74.5" width="23.6" height="4" fill="#D4D4D4"/><rect x="893.5" y="79.2" width="13.3" height="8" fill="#BDD0E8" stroke="#8FAFD8" stroke-width="0.8"/><path d="M906.8 79.2 L909.5 75.5 M906.8 87.2 L909.5 90.8" stroke="#8FAFD8" stroke-width="0.8"/><path d="M911.7 140.45 L917.7 140.45 L914.7 143.95 Z" fill="#555"/><g fill="none" stroke="#BDBDBD" stroke-width="1"><circle cx="976.9" cy="81.9" r="22.6" fill="#F6F2F6"/><ellipse cx="976.9" cy="81.9" rx="10" ry="22.6"/><path d="M954.3 81.9 L999.5 81.9 M959.3 68.6 C966 72.5 988 72.5 994.5 68.6 M959.3 95.6 C966 91.6 988 91.6 994.5 95.6"/></g><path d="M992.6 102.5 L987.3 97.1 L979.8 97.1 A5.5 5.5 0 0 0 979.8 108.1 L985 108.1" fill="#F3F3F3" stroke="#ABABAB" stroke-width="3.3" stroke-linecap="round" stroke-linejoin="round"/><path d="M985.6 102.5 L990.9 108.1 L998.2 108.1 A5.5 5.5 0 0 0 998.2 97.1 L993 97.1" fill="none" stroke="#ABABAB" stroke-width="3.3" stroke-linecap="round" stroke-linejoin="round"/><path d="M950.3 110.5 L1007.5 110.5" stroke="#DADADA"/><path d="M976.0 141.75 L982.0 141.75 L979 145.25 Z" fill="#C2C2C2"/><rect x="1023.3" y="65.9" width="39.5" height="35" fill="#F6F2F6" stroke="#C8C8C8" stroke-width="0.8"/><g fill="#A8A8A8"><rect x="1021.3" y="63.9" width="3.5" height="3.5"/><rect x="1061.3" y="63.9" width="3.5" height="3.5"/><rect x="1021.3" y="99.6" width="3.5" height="3.5"/><rect x="1061.3" y="99.6" width="3.5" height="3.5"/></g><polygon points="1043.00,71.20 1046.12,79.91 1055.36,80.18 1048.04,85.84 1050.64,94.72 1043.00,89.50 1035.36,94.72 1037.96,85.84 1030.64,80.18 1039.88,79.91" fill="#A6A6A6"/><path d="M1102 63.9 L1143 63.9 C1145 63.9 1145.7 64.8 1145.7 66.6 L1145.7 91.5 C1145.7 93.4 1145 94.2 1143 94.2 L1119 94.2 L1109 103.3 L1109 94.2 L1102 94.2 C1100 94.2 1099.3 93.4 1099.3 91.5 L1099.3 66.6 C1099.3 64.8 1100 63.9 1102 63.9 Z" fill="#FFF" stroke="#9A9A9A"/><path d="M1096 66.3 L1114.6 66.3 M1105.3 57 L1105.3 75.7" stroke="#5C9E80" stroke-width="4"/><rect x="1180.5" y="63.5" width="44.5" height="40" fill="#FFF" stroke="#999"/><path d="M1183.8 81.3 L1189.5 68.7 L1195.3 81.3 M1185.5 77.3 L1193.5 77.3" fill="none" stroke="#3F7CC4" stroke-width="1.8"/><path d="M1199 69 L1221.5 69 M1199 72.5 L1221.5 72.5 M1199 76 L1221.5 76 M1199 79.5 L1221.5 79.5 M1183 85 L1221.5 85 M1183 88.5 L1221.5 88.5 M1183 92 L1221.5 92 M1183 95.5 L1221.5 95.5 M1183 99 L1221.5 99" stroke="#B0B0B0" stroke-width="0.9"/><path d="M1251.5 60.8 L1274 60.8 L1283.5 70.3 L1283.5 106.3 L1251.5 106.3 Z" fill="#FFF" stroke="#999"/><path d="M1274 60.8 L1274 70.3 L1283.5 70.3" fill="none" stroke="#999"/><rect x="1255" y="64.3" width="15.2" height="5.8" fill="#EDC47A"/><rect x="1255" y="95.2" width="25" height="7.6" fill="#EDC47A"/><path fill-rule="evenodd" d="M1312.6 90.4 L1340.4 62.6 L1346.8 65.4 L1343.2 97 L1337.2 97 L1338.4 91.2 L1325.4 85.8 L1318.6 93 Z M1329 81.8 L1341 69.2 L1339.2 87 Z" fill="#4A80BE"/><path d="M1329.9 140.75 L1335.9 140.75 L1332.9 144.25 Z" fill="#555"/><g stroke="#B4B4B4" stroke-width="0.8" fill="#FFF"><rect x="1375.4" y="66.9" width="20" height="14.5"/></g><path d="M1380.4 66.9 L1380.4 81.4 M1385.4 66.9 L1385.4 81.4 M1390.4 66.9 L1390.4 81.4 M1375.4 70.5 L1395.4 70.5 M1375.4 74.1 L1395.4 74.1 M1375.4 77.7 L1395.4 77.7" stroke="#B4B4B4" stroke-width="0.8"/><rect x="1380.4" y="70.5" width="3.6" height="3.6" fill="#FFF" stroke="#E8894A" stroke-width="0.9"/><circle cx="1393.5" cy="79.5" r="5.6" fill="#FFF" stroke="#5E95D3" stroke-width="1"/><path d="M1393.3 76.3 L1393.3 80 L1396 80" fill="none" stroke="#777" stroke-width="0.8"/><rect x="1374.5" y="97.6" width="23" height="18" rx="1.2" fill="#FFF" stroke="#9A9A9A"/><rect x="1377.5" y="100.5" width="17.5" height="2.8" fill="#D8D8D8"/><path d="M1384 106.5 L1383 113.5 M1387.5 106.5 L1386.5 113.5 M1382 108.8 L1389.5 108.8 M1381.5 111.3 L1389 111.3" stroke="#3F7CC4" stroke-width="1"/><path d="M1381.3 129.9 L1392 129.9 L1397.3 135 L1397.3 150 L1381.3 150 Z M1392 129.9 L1392 135 L1397.3 135" fill="#FFF" stroke="#9A9A9A" stroke-width="0.9"/><rect x="1374.2" y="138.2" width="12" height="10.5" fill="#FFF" stroke="#4A80BE" stroke-width="1"/><rect x="1374.2" y="138.2" width="12" height="2" fill="#4A80BE"/><path d="M1434 75.8 C1437 68 1440 64.3 1447 64.3 L1474.1 64.3 L1474.1 70.1 L1464.5 70.1 C1464.3 78 1463.8 86 1464.5 92 C1465 96 1466.5 96.5 1468 96.3 C1470.5 96 1472 93 1473.2 90.9 L1474.1 91.3 C1473 98 1470 102.7 1465 102.7 C1459 102.7 1457 98 1457 92 C1457 84 1457.3 76 1457.3 70.1 L1450.5 70.1 C1450 82 1448.5 93 1446 98.5 C1444.5 101.7 1443 102.7 1441 102.7 C1438.5 102.7 1437 101 1437 99.5 C1437 97 1440 94 1442.5 89 C1445 83 1446.2 76 1446.5 70.3 L1442.5 70.3 C1438.5 70.5 1436.5 72.5 1434.8 76.3 Z" fill="#4A80BE"/><path d="M1424 110.3 L1485.2 110.3" stroke="#DADADA"/><path d="M1451.5 142.05 L1457.5 142.05 L1454.5 145.55 Z" fill="#555"/><text x="1521.2" y="101.8" text-anchor="middle" font-family="Liberation Serif" font-weight="bold" font-size="57.5" fill="#AFAEB0">&#937;</text><rect x="1575.8" y="65.5" width="37.6" height="35.3" fill="#FFF" stroke="#8A8A8A" stroke-width="1"/><path d="M1575.8 69.9 L1613.4 69.9 M1575.8 96.4 L1613.4 96.4" stroke="#9A9A9A" stroke-width="0.9"/><rect x="1579.6" y="65.5" width="2.8" height="4.4" fill="#6E6E6E"/><rect x="1579.6" y="96.4" width="2.8" height="4.4" fill="#6E6E6E"/><rect x="1586.3" y="65.5" width="2.8" height="4.4" fill="#6E6E6E"/><rect x="1586.3" y="96.4" width="2.8" height="4.4" fill="#6E6E6E"/><rect x="1592.9" y="65.5" width="2.8" height="4.4" fill="#6E6E6E"/><rect x="1592.9" y="96.4" width="2.8" height="4.4" fill="#6E6E6E"/><rect x="1599.5" y="65.5" width="2.8" height="4.4" fill="#6E6E6E"/><rect x="1599.5" y="96.4" width="2.8" height="4.4" fill="#6E6E6E"/><rect x="1606.1" y="65.5" width="2.8" height="4.4" fill="#6E6E6E"/><rect x="1606.1" y="96.4" width="2.8" height="4.4" fill="#6E6E6E"/><path d="M1592.1 141.15 L1598.1 141.15 L1595.1 144.65 Z" fill="#555"/><path d="M1635.9 74.4 L1645 74.4 L1659 62.5 C1660.5 61.3 1661.1 62 1661.1 63.5 L1661.1 102.6 C1661.1 104.2 1660.5 104.8 1659 103.6 L1645 91.8 L1635.9 91.8 Z" fill="#7F7F7F"/><path d="M1664.2 71.8 C1671 77 1671 90 1664 95.2 M1668.3 66.2 C1679 73 1679 94 1668.3 100.3" fill="none" stroke="#3F7CC4" stroke-width="2.5"/><path d="M1654.1 141.15 L1660.1 141.15 L1657.1 144.65 Z" fill="#555"/><rect x="1706.8" y="61.6" width="37.8" height="38.6" rx="1.5" fill="#FFF" stroke="#B8B8B8" stroke-width="1.3" stroke-dasharray="1.6 2.4"/><rect x="1709" y="88" width="16.8" height="16.8" rx="2" fill="#B4B4B4"/><path d="M1727 92 L1732.3 88.5 L1732.3 102 L1727 99 Z" fill="#7C7C7C"/><path d="M1703.2 89.5 L1705.5 89.5 L1706.5 91.5 L1718.5 91.5 L1718.5 95.5 L1706.5 95.5 L1705.5 97.8 L1703.2 97.8 Z" fill="#4A80BE"/><rect x="1710.5" y="98.5" width="2.8" height="1.4" fill="#FFF"/><path d="M1737.8 99.2 L1748.8 99.2 M1743.3 93.6 L1743.3 104.6" stroke="#3F7CC4" stroke-width="2.8"/><path d="M1786.8 182 L1792.2 176 L1797.6 182" fill="none" stroke="#555" stroke-width="1.4"/><circle cx="1386.3" cy="107.6" r="45.6" fill="none" stroke="#BA0A8A" stroke-width="9.3"/></svg></body></html>
